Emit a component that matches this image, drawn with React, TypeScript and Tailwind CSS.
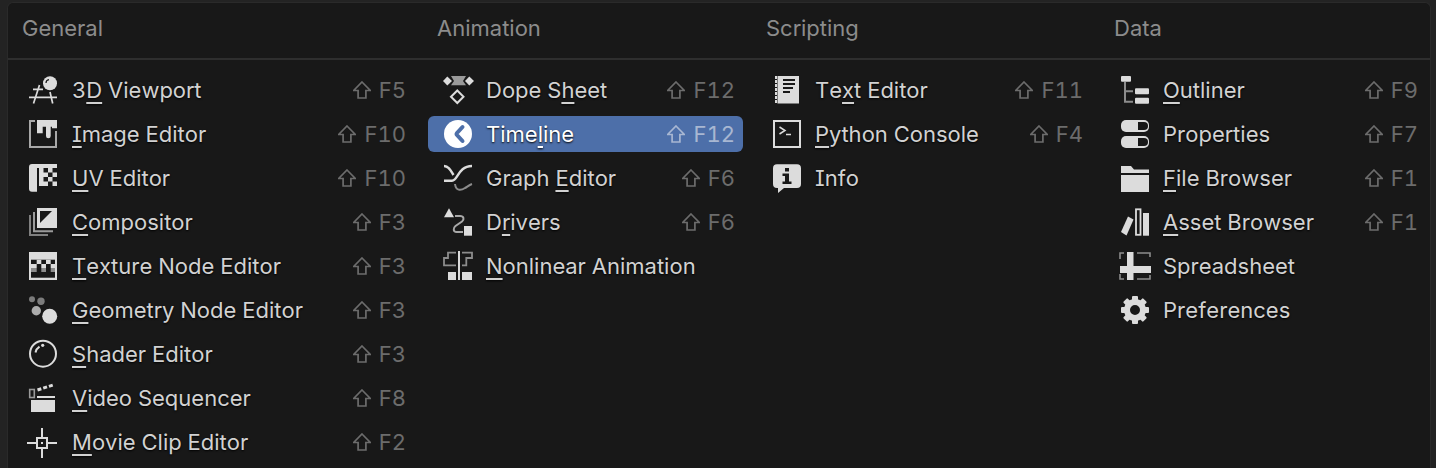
import type { ReactNode } from "react";

type MenuItem = {
  before: string;
  mnemonic?: string;
  after?: string;
  shortcut?: string;
  icon: ReactNode;
  active?: boolean;
};

type MenuColumn = {
  title: string;
  widthClass: string;
  titleClass: string;
  items: MenuItem[];
};

const light = "#dcdcdc";
const grey = "#8c8c8c";
const dark = "#181818";

function Icon({ children }: { children: ReactNode }) {
  return (
    <svg
      width="32"
      height="30"
      viewBox="0 0 32 30"
      fill="none"
      className="shrink-0 overflow-visible"
    >
      {children}
    </svg>
  );
}

function ShiftGlyph() {
  return (
    <svg
      width="18"
      height="18"
      viewBox="0 0 18 18"
      fill="none"
      stroke="currentColor"
      strokeWidth="1.7"
      className="shrink-0"
    >
      <path d="M9 1 L17.3 9.5 H12.9 V17 H5.1 V9.5 H0.7 Z" />
    </svg>
  );
}

const general: MenuItem[] = [
  {
    before: "3",
    mnemonic: "D",
    after: " Viewport",
    shortcut: "F5",
    icon: (
      <Icon>
        <g stroke={light} strokeWidth="1.7">
          <path d="M5 14.3H15M1 22.3H29M11.5 10L5.5 28.5M22 17L24.7 28.5" />
        </g>
        <circle cx="22" cy="8.3" r="7" fill={light} />
        <path d="M18 8C18 6 19.5 4.8 21 4.6" stroke={dark} strokeWidth="1.2" />
      </Icon>
    ),
  },
  {
    before: "",
    mnemonic: "I",
    after: "mage Editor",
    shortcut: "F10",
    icon: (
      <Icon>
        <path d="M7 2H2V28H28V12" stroke="#a8a8a8" strokeWidth="2" />
        <path
          d="M9 1H29V9.3H24V7.7H22.7V17A2.3 2.3 0 0 1 18 17V7.7H14.7V14.3H9Z"
          fill={light}
        />
      </Icon>
    ),
  },
  {
    before: "",
    mnemonic: "U",
    after: "V Editor",
    shortcut: "F10",
    icon: (
      <Icon>
        <path
          d="M4 1H29V25H9V28.7H4A3 3 0 0 1 1 25.7V4A3 3 0 0 1 4 1Z"
          fill={light}
        />
        <path
          d="M9 5H11V25H9ZM15.5 5H20V9.5H15.5ZM24.5 5H29V9.5H24.5ZM15.5 14H20V18.5H15.5ZM24.5 14H29V18.5H24.5ZM20 9.5H24.5V14H20ZM20 18.5H24.5V23H20ZM11 23H29V25H11Z"
          fill={dark}
        />
      </Icon>
    ),
  },
  {
    before: "",
    mnemonic: "C",
    after: "ompositor",
    shortcut: "F3",
    icon: (
      <Icon>
        <path d="M6 5V24.2H25" stroke="#9a9a9a" strokeWidth="2" />
        <path d="M2 8V28H20" stroke="#808080" strokeWidth="2" />
        <rect x="9" y="1" width="20" height="20" fill={light} />
        <path d="M12 4H24L12 16Z" fill={dark} />
      </Icon>
    ),
  },
  {
    before: "",
    mnemonic: "T",
    after: "exture Node Editor",
    shortcut: "F3",
    icon: (
      <Icon>
        <rect x="1" y="1" width="28" height="28" fill={light} />
        <rect x="3" y="8.7" width="24" height="18" fill={dark} />
        <path
          d="M8.7 8.7H13.3V13H8.7ZM18 8.7H22.7V13H18ZM3 13H8.7V17H3ZM13.3 13H18V17H13.3ZM22.7 13H27V17H22.7Z"
          fill={light}
        />
        <path d="M3 17H8.7V21H3ZM13.3 17H18V21H13.3ZM22.7 17H27V21H22.7Z" fill={grey} />
      </Icon>
    ),
  },
  {
    before: "",
    mnemonic: "G",
    after: "eometry Node Editor",
    shortcut: "F3",
    icon: (
      <Icon>
        <circle cx="4" cy="4.3" r="3" fill="#7c7c7c" />
        <circle cx="13" cy="6.3" r="3.7" fill="#7c7c7c" />
        <circle cx="8.3" cy="15.7" r="4.7" fill="#acacac" />
        <circle cx="21.7" cy="21.3" r="7.5" fill={light} />
      </Icon>
    ),
  },
  {
    before: "",
    mnemonic: "S",
    after: "hader Editor",
    shortcut: "F3",
    icon: (
      <Icon>
        <circle cx="15" cy="14.7" r="13" stroke={light} strokeWidth="2" />
        <path d="M7.5 13.5C8 11 9.5 9 11.5 7.7" stroke={light} strokeWidth="2" />
        <circle cx="14.7" cy="6.3" r="1.6" fill={light} />
      </Icon>
    ),
  },
  {
    before: "",
    mnemonic: "V",
    after: "ideo Sequencer",
    shortcut: "F8",
    icon: (
      <Icon>
        <rect x="1.7" y="6.5" width="4.6" height="8" stroke="#9a9a9a" strokeWidth="1.6" />
        <rect x="3" y="17" width="24" height="12" fill={light} />
        <rect x="9" y="13" width="18" height="2" fill={light} />
        <path d="M9.5 7L25 2" stroke={light} strokeWidth="3" strokeDasharray="4 2" />
      </Icon>
    ),
  },
  {
    before: "",
    mnemonic: "M",
    after: "ovie Clip Editor",
    shortcut: "F2",
    icon: (
      <Icon>
        <g stroke={light} strokeWidth="2">
          <rect x="9" y="11" width="10" height="10" />
          <path d="M-1 16H8M20 16H29M14 1V10M14 22V31" />
        </g>
        <rect x="13" y="15" width="2" height="2" fill={light} />
      </Icon>
    ),
  },
];

const animation: MenuItem[] = [
  {
    before: "Dope S",
    mnemonic: "h",
    after: "eet",
    shortcut: "F12",
    icon: (
      <Icon>
        <path d="M9 1H24L21 6L24 10.3H9L12 6Z" fill="#9a9a9a" />
        <path d="M5.3 1.5L10 6L5.3 10.5L1 6Z" fill={light} />
        <path d="M27.3 1.5L32 6L27.3 10.5L23 6Z" fill={light} />
        <path d="M15.3 15.5L21.5 21.7L15.3 28L9 21.7Z" stroke={light} strokeWidth="2" />
      </Icon>
    ),
  },
  {
    before: "Time",
    mnemonic: "l",
    after: "ine",
    shortcut: "F12",
    active: true,
    icon: (
      <Icon>
        <circle cx="16" cy="15" r="14" fill="#ffffff" />
        <path
          d="M20.5 8L15 14C14.5 14.6 14.5 15.4 15 16L20.5 22"
          stroke="#4d6fa9"
          strokeWidth="4"
          strokeLinecap="round"
        />
      </Icon>
    ),
  },
  {
    before: "Graph ",
    mnemonic: "E",
    after: "ditor",
    shortcut: "F6",
    icon: (
      <Icon>
        <g stroke={light} strokeWidth="2.4">
          <path d="M2 3C7 3 9 8 11.5 12" />
          <path d="M2 17.7H10C16 17.7 16 3 30 3" />
        </g>
        <path
          d="M13 21C14 29 20 27 23 25C25 24 27 22 30 21"
          stroke={grey}
          strokeWidth="2"
        />
      </Icon>
    ),
  },
  {
    before: "D",
    mnemonic: "r",
    after: "ivers",
    shortcut: "F6",
    icon: (
      <Icon>
        <path d="M7 1.3L12 10.3H2Z" fill={light} />
        <rect x="22" y="19" width="8" height="9.7" fill={light} />
        <path
          d="M13 9H18C22 9 22.5 12.5 20 14.5L13.5 19C11 21 11 25 14.5 25H21"
          stroke="#a8a8a8"
          strokeWidth="2"
        />
      </Icon>
    ),
  },
  {
    before: "",
    mnemonic: "N",
    after: "onlinear Animation",
    icon: (
      <Icon>
        <rect x="16" y="0" width="2" height="29" fill={light} />
        <path d="M14 1.7H6V7H2V14.3H14M20 1.7H30V7H24.3V14.3H20" stroke={grey} strokeWidth="1.8" />
        <rect x="6" y="21" width="8" height="8" fill={light} />
        <rect x="20" y="21" width="10" height="8" fill={light} />
      </Icon>
    ),
  },
];

const scripting: MenuItem[] = [
  {
    before: "Te",
    mnemonic: "x",
    after: "t Editor",
    shortcut: "F11",
    icon: (
      <Icon>
        <path d="M5 1V28.5" stroke={light} strokeWidth="2" strokeDasharray="3 1" />
        <rect x="6.5" y="1" width="21.5" height="27.5" fill={light} />
        <path d="M12 5H24M12 9H24M12 13H22M12 17H19" stroke={dark} strokeWidth="2" />
      </Icon>
    ),
  },
  {
    before: "",
    mnemonic: "P",
    after: "ython Console",
    shortcut: "F4",
    icon: (
      <Icon>
        <rect x="3" y="2" width="26" height="26" stroke={light} strokeWidth="2" />
        <path d="M8.5 8L14 11.5L8.5 15M15 15.5H20" stroke={light} strokeWidth="1.5" />
      </Icon>
    ),
  },
  {
    before: "Info",
    icon: (
      <Icon>
        <path
          d="M6 1.3H26A4 4 0 0 1 30 5.3V21A4 4 0 0 1 26 25H13L7 30V25H6A4 4 0 0 1 2 21V5.3A4 4 0 0 1 6 1.3Z"
          fill={light}
        />
        <rect x="14" y="5" width="4" height="3.5" fill={dark} />
        <path d="M11.5 10.5H18V18.5H20.5V21H11.5V18.5H14V13H11.5Z" fill={dark} />
      </Icon>
    ),
  },
];

const data: MenuItem[] = [
  {
    before: "",
    mnemonic: "O",
    after: "utliner",
    shortcut: "F9",
    icon: (
      <Icon>
        <rect x="2" y="1" width="10" height="5.7" rx="1" fill={light} />
        <path d="M6 7V26.7H14M6 16.3H14" stroke={grey} strokeWidth="2" />
        <rect x="16" y="13.3" width="14" height="6" rx="1" fill={light} />
        <rect x="16" y="22.7" width="14" height="6" rx="1" fill={light} />
      </Icon>
    ),
  },
  {
    before: "Properties",
    shortcut: "F7",
    icon: (
      <Icon>
        <rect x="2" y="1" width="28" height="12" rx="5" fill={light} />
        <path d="M19 3H25A3.8 3.8 0 0 1 25 11H19Z" fill={dark} />
        <rect x="2" y="17" width="28" height="12" rx="5" fill={light} />
        <path d="M19 19H25A3.8 3.8 0 0 1 25 27H19Z" fill={dark} />
      </Icon>
    ),
  },
  {
    before: "",
    mnemonic: "F",
    after: "ile Browser",
    shortcut: "F1",
    icon: (
      <Icon>
        <path d="M2 3H12L15 6.5H30V10H2Z" fill={light} />
        <rect x="2" y="12" width="28" height="17" fill={light} />
      </Icon>
    ),
  },
  {
    before: "",
    mnemonic: "A",
    after: "sset Browser",
    shortcut: "F1",
    icon: (
      <Icon>
        <path d="M2 25L9 9.5L14.5 12.5L7.5 28.5Z" fill={light} />
        <rect x="17" y="2.3" width="4.5" height="25.5" stroke={light} strokeWidth="1.8" />
        <rect x="24" y="6" width="6" height="22.7" fill={light} />
      </Icon>
    ),
  },
  {
    before: "Spreadsheet",
    icon: (
      <Icon>
        <path
          d="M5 2H1V8M1 23V28H5M10 28H13M18 2H31V6M31 24V28H18"
          stroke={grey}
          strokeWidth="1.6"
        />
        <rect x="8" y="1" width="6.5" height="28" fill={light} />
        <rect x="1" y="15" width="31" height="7" fill={light} />
      </Icon>
    ),
  },
  {
    before: "Preferences",
    icon: (
      <Icon>
        <g fill={light}>
          {[0, 45, 90, 135, 180, 225, 270, 315].map((angle) => (
            <rect
              key={angle}
              x="13"
              y="1"
              width="6"
              height="6"
              rx="1"
              transform={`rotate(${angle} 16 15)`}
            />
          ))}
        </g>
        <circle cx="16" cy="15" r="8" stroke={light} strokeWidth="6" />
      </Icon>
    ),
  },
];

const columns: MenuColumn[] = [
  {
    title: "General",
    widthClass: "w-[400px]",
    titleClass: "pl-[8px]",
    items: general,
  },
  {
    title: "Animation",
    widthClass: "w-[315px]",
    titleClass: "pl-[9px]",
    items: animation,
  },
  {
    title: "Scripting",
    widthClass: "w-[334px]",
    titleClass: "pl-[9px]",
    items: scripting,
  },
  {
    title: "Data",
    widthClass: "w-[321px]",
    titleClass: "pl-[9px]",
    items: data,
  },
];

function MenuRow({ item }: { item: MenuItem }) {
  const rowClass = item.active
    ? "bg-[#4d6fa9] text-white"
    : "text-[#d2d2d2]";

  const shortcutClass = item.active
    ? "text-[#a8b7d2]"
    : "text-[#6c6c6c]";

  return (
    <div className={`flex h-[36px] items-center rounded-[6px] pl-[14px] pr-[8px] ${rowClass}`}>
      {item.icon}

      <span className="ml-[12px] whitespace-pre [text-shadow:0_1px_2px_#000]">
        {item.before}
        {item.mnemonic && (
          <span className="underline decoration-2 underline-offset-[4px] [text-decoration-skip-ink:none]">
            {item.mnemonic}
          </span>
        )}
        {item.after}
      </span>

      {item.shortcut && (
        <span className={`ml-auto flex items-center gap-[8px] ${shortcutClass}`}>
          <ShiftGlyph />
          {item.shortcut}
        </span>
      )}
    </div>
  );
}

export default function App() {
  return (
    <div className="h-[468px] w-[1436px] overflow-hidden bg-[#232323] pl-[7px] pt-[2px] font-['Inter',sans-serif] text-[22px] leading-none [font-kerning:none] [font-feature-settings:'cv08','tnum']">
      <div className="h-[480px] w-[1424px] rounded-[6px] border-t border-l border-r border-[#2a2a2a] bg-[#181818]">
        <div className="flex h-[57px] gap-[14px] border-b-2 border-[#2e2e2e] pl-[6px]">
          {columns.map((column) => (
            <div
              key={column.title}
              className={`flex items-center pb-[6px] text-[#8c8c8c] ${column.widthClass} ${column.titleClass}`}
            >
              {column.title}
            </div>
          ))}
        </div>

        <div className="flex gap-[14px] pl-[6px] pt-[12px]">
          {columns.map((column) => (
            <div
              key={column.title}
              className={`flex flex-col gap-[8px] ${column.widthClass}`}
            >
              {column.items.map((item) => (
                <MenuRow
                  key={item.before + (item.mnemonic ?? "")}
                  item={item}
                />
              ))}
            </div>
          ))}
        </div>
      </div>
    </div>
  );
}
